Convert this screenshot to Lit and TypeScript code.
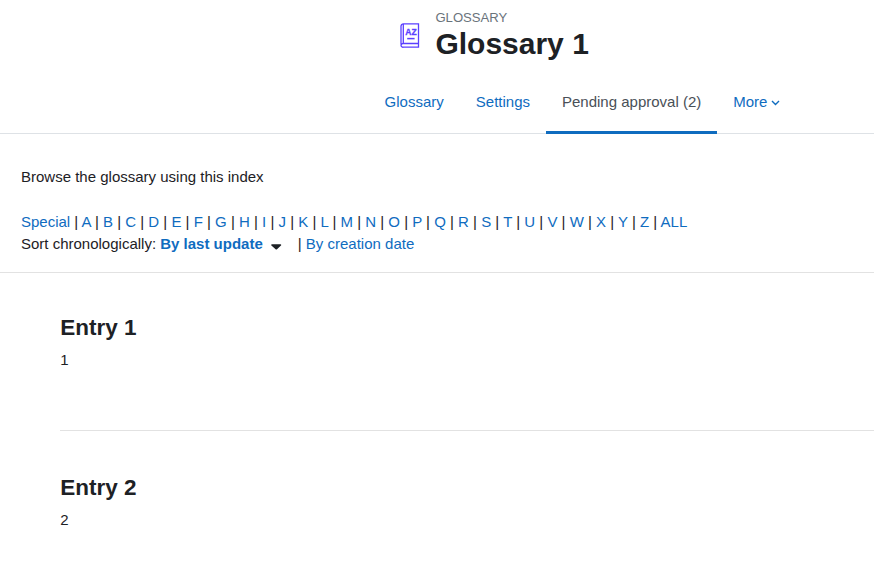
import { LitElement, html, css } from "lit";
import { customElement } from "lit/decorators.js";

const LETTERS = ["A","B","C","D","E","F","G","H","I","J","K","L","M","N","O","P","Q","R","S","T","U","V","W","X","Y","Z","ALL"];

@customElement("app-root")
export class AppRoot extends LitElement {
  static styles = css`
    :host { display: block; color: #1d2125; font-family: "Liberation Sans", Arial, sans-serif; font-size: 15px; line-height: 22.5px; }
    a { color: #0f6cbf; text-decoration: none; }
    .head { display: flex; height: 69px; padding: 0 0 0 399px; box-sizing: border-box; }
    .icon { width: 22px; height: 26px; margin: 23px 14.4px 0 0; flex: none; display: block; }
    .kicker { font-size: 13.125px; line-height: 15px; color: #6a737b; margin-top: 10px; }
    h1 { margin: 1px 0 0; font-size: 30px; line-height: 36px; font-weight: 700; color: #1d2125; }
    .tabs { display: flex; height: 65px; padding-left: 368.6px; border-bottom: 1px solid #dee2e6; box-sizing: border-box; }
    .tab { padding: 22px 16px 0; height: 64px; box-sizing: border-box; color: #0f6cbf; display: flex; align-items: flex-start; gap: 4px; }
    .tab.active { color: #495057; border-bottom: 3px solid #0f6cbf; height: 65px; }
    .chev { width: 9px; height: 6px; margin-top: 9px; display: block; }
    .main { padding: 32px 0 0 21px; }
    .browse { height: 22px; line-height: 22px; }
    .index { margin-top: 23px; white-space: nowrap; line-height: 22px; }
    .sort { white-space: nowrap; line-height: 22px; display: flex; }
    .sort b { font-weight: 700; color: #0f6cbf; }
    .caret { display: block; width: 11px; height: 6px; margin: 11px 16px 0 8px; }
    .sep { border: 0; border-top: 1px solid #e2e2e2; margin: 17px 0 0 -21px; }
    .entries { padding: 41px 0 0 60.3px; }
    .entry { height: 116px; }
    .entry + .entry { border-top: 1px solid #e2e2e2; margin-left: -0.3px; padding: 43px 0 0 0.3px; height: auto; }
    h2 { margin: 0; font-size: 22.5px; line-height: 27px; font-weight: 700; color: #1d2125; }
    .entry p { margin: 8px 0 0; line-height: 22px; }
  `;

  render() {
    return html`
      <div class="head">
        <svg class="icon" viewBox="0 0 22 26" fill="none" stroke="#5b40ff" stroke-width="1.3">
          <path d="M2 21.5V3A2.5 2.5 0 0 1 4.5 0.9h15v19.6H4.5A2.3 2.3 0 0 0 2 22.3 2 2 0 0 0 4.5 24.2h15v-3.7" />
          <path d="M4.3 1v19.5" />
          <text x="12" y="12.4" text-anchor="middle" font-family="Liberation Sans, sans-serif" font-size="8.5" font-weight="700" fill="#5b40ff" stroke="#5b40ff" stroke-width="0.3">AZ</text>
          <path d="M8.2 15.6h7.4" stroke-width="1.5" />
        </svg>
        <div>
          <div class="kicker">GLOSSARY</div>
          <h1>Glossary 1</h1>
        </div>
      </div>
      <nav class="tabs">
        <a class="tab">Glossary</a>
        <a class="tab">Settings</a>
        <a class="tab active">Pending approval (2)</a>
        <a class="tab">More<svg class="chev" viewBox="0 0 9 6" fill="none" stroke="#0f6cbf" stroke-width="1.4"><path d="M1 1l3.5 3.5L8 1"/></svg></a>
      </nav>
      <div class="main">
        <div class="browse">Browse the glossary using this index</div>
        <div class="index"><a>Special</a>${LETTERS.map((l) => html` | <a>${l}</a>`)}</div>
        <div class="sort"><span>Sort chronologically:&nbsp;</span><b>By last update</b><svg class="caret" viewBox="0 0 11 6"><path d="M1 0.3h8.4c.8 0 1.1.8.6 1.3L6 5.3c-.4.4-1 .4-1.4 0L.4 1.6C-.1 1.1.2.3 1 .3z" fill="#1d2125"/></svg><span>|&nbsp;</span><a>By creation date</a></div>
        <hr class="sep" />
      </div>
      <div class="entries">
        <div class="entry"><h2>Entry 1</h2><p>1</p></div>
        <div class="entry"><h2>Entry 2</h2><p>2</p></div>
      </div>
    `;
  }
}
